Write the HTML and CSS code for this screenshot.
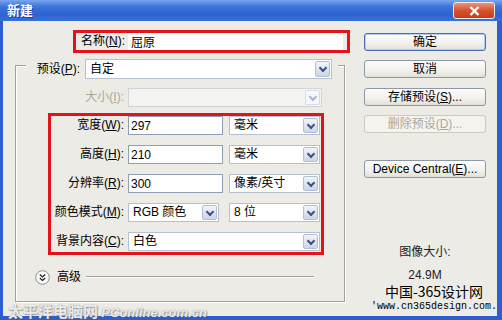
FILE: index.html
```html
<!DOCTYPE html>
<html>
	<head>
		<meta charset="UTF-8">
		<title>新建</title>
		<link rel="stylesheet" href="styles.css">
	</head>
	<body>
		<div class="window">
			<div class="titlebar">
				<span class="title">新建</span>
				<span class="close">
					<svg width="11" height="10" viewBox="0 0 11 10"><path d="M1.5 1l8 8M9.5 1l-8 8" stroke="#fff" stroke-width="2.4" fill="none"/></svg>
				</span>
			</div>
			<div class="client">
				<div class="main">
					<div class="name-box mark">
						<label class="lbl">名称(<u>N</u>):</label>
						<input class="field name-field" type="text" value="屈原">
					</div>
					<div class="group">
						<div class="row preset-row">
							<label class="lbl">预设(<u>P</u>):</label>
							<div class="select w-preset"><span>自定</span><i class="arrow"></i></div>
						</div>
						<div class="row size-row off">
							<label class="lbl">大小(<u>I</u>):</label>
							<div class="select w-size"><span></span><i class="arrow"></i></div>
						</div>
						<div class="spec mark">
							<div class="row">
								<label class="lbl">宽度(<u>W</u>):</label>
								<input class="field w-num" type="text" value="297">
								<div class="select w-unit"><span>毫米</span><i class="arrow"></i></div>
							</div>
							<div class="row">
								<label class="lbl">高度(<u>H</u>):</label>
								<input class="field w-num" type="text" value="210">
								<div class="select w-unit"><span>毫米</span><i class="arrow"></i></div>
							</div>
							<div class="row">
								<label class="lbl">分辨率(<u>R</u>):</label>
								<input class="field w-num" type="text" value="300">
								<div class="select w-unit"><span>像素/英寸</span><i class="arrow"></i></div>
							</div>
							<div class="row">
								<label class="lbl">颜色模式(<u>M</u>):</label>
								<div class="select w-mode"><span>RGB 颜色</span><i class="arrow"></i></div>
								<div class="select w-unit gap-l"><span>8 位</span><i class="arrow"></i></div>
							</div>
							<div class="row">
								<label class="lbl">背景内容(<u>C</u>):</label>
								<div class="select w-bg"><span>白色</span><i class="arrow"></i></div>
							</div>
						</div>
						<div class="advanced">
							<svg class="adv-icon" width="15" height="15" viewBox="0 0 15 15">
								<circle cx="7.5" cy="7.5" r="6.8" fill="#fafafa" stroke="#8e8e8e"/>
								<path d="M4.8 4.6l2.7 2.4 2.7-2.4M4.8 8l2.7 2.4 2.7-2.4" fill="none" stroke="#222" stroke-width="1.3"/>
							</svg>
							<span class="adv-text">高级</span>
							<span class="adv-line"></span>
						</div>
					</div>
				</div>
				<div class="side">
					<div class="btn default">确定</div>
					<div class="btn gap-9">取消</div>
					<div class="btn gap-10">存储预设(<u>S</u>)...</div>
					<div class="btn gap-9 off">删除预设(<u>D</u>)...</div>
					<div class="btn gap-27">Device Central(<u>E</u>)...</div>
					<div class="info">图像大小:</div>
					<div class="info size-val">24.9M</div>
				</div>
			</div>
			<div class="stamp">
				<div class="stamp-cn">中国-365设计网</div>
				<div class="stamp-url">'www.cn365design.com.</div>
			</div>
			<div class="watermark"><span class="wm-cn">太平洋电脑网</span> <span class="wm-en">PConline.com.cn</span></div>
		</div>
	</body>
</html>
```
FILE: styles.css
```css
body{
	margin: 0;
	font: 12px/17px "Liberation Sans", "Noto Sans CJK SC", sans-serif;
	color: #000;
}
.window{
	position: relative;
	width: 502px;
	height: 320px;
	box-sizing: border-box;
	padding: 0 5px 4px 3px;
	background: #2d5ed0;
}
.titlebar{
	display: flex;
	align-items: center;
	justify-content: space-between;
	height: 21px;
	margin: 0 -5px 0 -3px;
	padding: 0 7px;
	background: linear-gradient(#7aa6ee, #3c75dc 30%, #2c63d0 70%, #3a70d8);
}
.title{
	color: #fff;
	font-weight: bold;
	font-size: 13px;
	text-shadow: 1px 1px 0 #1a3f9a;
}
.close{
	display: flex;
	align-items: center;
	justify-content: center;
	width: 42px;
	height: 17px;
	box-sizing: border-box;
	border: 1px solid #f2ece8;
	border-radius: 3px;
	background: linear-gradient(#ea9477, #d4532f 50%, #c33d1c);
}
.client{
	display: flex;
	height: 295px;
	background: #ecebe6;
}
.main{
	width: 350px;
}
.mark{
	box-sizing: border-box;
	border: 3px solid #e3121b;
}
.row{
	display: flex;
	align-items: center;
	height: 19px;
}
.lbl{
	box-sizing: border-box;
	text-align: right;
	padding-right: 4px;
	white-space: nowrap;
}
.field{
	box-sizing: border-box;
	height: 19px;
	margin: 0;
	padding: 0 2px;
	border: 1px solid #8e9fb4;
	background: #fff;
	font: 12px "Liberation Sans", "Noto Sans CJK SC", sans-serif;
	outline: none;
}
.name-box{
	display: flex;
	align-items: center;
	width: 277px;
	height: 23px;
	margin: 9px 0 0 70px;
}
.name-box .lbl{
	width: 52px;
	padding-right: 3px;
}
.name-field{
	width: 215px;
	height: 17px;
	border-color: #fff;
}
.group{
	box-sizing: border-box;
	width: 330px;
	height: 237px;
	margin: 12px 0 0 12px;
	border: 1px solid #a2a19c;
	box-shadow: inset 1px 1px 0 #fff, 1px 1px 0 #fff;
}
.preset-row{
	height: 20px;
	margin: -7px 6px 0 10px;
	background: #ecebe6;
}
.preset-row .lbl{
	width: 59px;
	padding-right: 5px;
}
.size-row{
	margin-top: 9px;
}
.size-row .lbl{
	width: 112px;
}
.off, .off .lbl{
	color: #aca899;
}
.select{
	position: relative;
	box-sizing: border-box;
	height: 19px;
	padding-left: 4px;
	border: 1px solid #b6c1cf;
	background: #fff;
	white-space: nowrap;
	overflow: hidden;
}
.preset-row .select{
	height: 20px;
	line-height: 18px;
}
.arrow{
	position: absolute;
	top: 1px;
	right: 1px;
	bottom: 1px;
	width: 15px;
	box-sizing: border-box;
	border: 1px solid #b3bfd2;
	border-radius: 2px;
	background: linear-gradient(#f1f4fa, #cdd6e6);
}
.arrow::after{
	content: "";
	position: absolute;
	left: 4px;
	top: 3px;
	width: 4px;
	height: 4px;
	border-right: 2px solid #3d5184;
	border-bottom: 2px solid #3d5184;
	transform: rotate(45deg);
}
.off .select{
	background: #f4f3ef;
	border-color: #cfd3da;
}
.off .arrow{
	background: #f6f7fa;
	border-color: #d7dde8;
}
.off .arrow::after{
	border-color: #a9b7d2;
}
.w-preset{ width: 247px; }
.w-size{ width: 194px; }
.w-num{ width: 95px; }
.w-unit{ width: 91px; margin-left: 6px; }
.w-mode{ width: 91px; }
.w-unit.gap-l{ margin-left: 10px; }
.w-bg{ width: 192px; }
.spec{
	display: flex;
	flex-direction: column;
	gap: 10px;
	width: 276px;
	height: 142px;
	margin: 6px 0 0 32px;
}
.spec .lbl{
	width: 77px;
}
.advanced{
	display: flex;
	align-items: center;
	height: 16px;
	margin: 14px 30px 0 19px;
}
.adv-text{
	margin-left: 7px;
}
.adv-line{
	flex: 1;
	height: 1px;
	margin-left: 5px;
	background: #a2a19c;
	border-bottom: 1px solid #fff;
}
.side{
	width: 122px;
	margin-left: 11px;
	padding-top: 12px;
}
.btn{
	box-sizing: border-box;
	height: 18px;
	line-height: 16px;
	text-align: center;
	border: 1px solid #8d97a6;
	border-radius: 3px;
	background: linear-gradient(#fdfdfd, #f1f0ec 60%, #e2e0d8);
}
.btn.default{
	border-color: #4b6fb6;
	box-shadow: inset 0 0 0 1px #b2cdf3;
}
.btn.off{
	color: #aca899;
	border-color: #cbc9c0;
	background: #f4f3ee;
}
.gap-9{ margin-top: 9px; }
.gap-10{ margin-top: 10px; }
.gap-27{ margin-top: 27px; }
.info{
	margin-top: 67px;
	line-height: 14px;
	text-align: center;
	color: #222;
}
.info.size-val{
	margin-top: 9px;
}
.stamp{
	position: absolute;
	left: 370px;
	top: 283px;
	width: 128px;
	text-align: center;
}
.stamp-cn{
	font: 14px/16px "Noto Sans CJK SC", sans-serif;
}
.stamp-url{
	font: 10px/12px "Liberation Mono", monospace;
	margin-top: 2px;
}
.watermark{
	position: absolute;
	left: 8px;
	top: 300px;
	color: rgba(255,255,255,0.85);
	text-shadow: 0 0 1px #7d7d7d, 1px 1px 1px rgba(90,90,90,0.5);
	white-space: nowrap;
	line-height: 17px;
}
.wm-cn{
	font: bold 15px "Noto Sans CJK SC", sans-serif;
}
.wm-en{
	font: bold italic 13px "Liberation Sans", sans-serif;
}
```
